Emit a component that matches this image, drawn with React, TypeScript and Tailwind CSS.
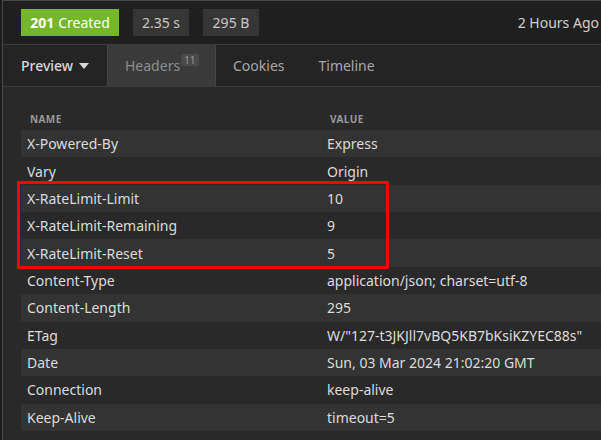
import React from 'react';

const headers: [string, string][] = [
	['X-Powered-By', 'Express'],
	['Vary', 'Origin'],
	['X-RateLimit-Limit', '10'],
	['X-RateLimit-Remaining', '9'],
	['X-RateLimit-Reset', '5'],
	['Content-Type', 'application/json; charset=utf-8'],
	['Content-Length', '295'],
	['ETag', 'W/"127-t3JKJll7vBQ5KB7bKsiKZYEC88s"'],
	['Date', 'Sun, 03 Mar 2024 21:02:20 GMT'],
	['Connection', 'keep-alive'],
	['Keep-Alive', 'timeout=5'],
];

function HeaderRow({ name, value, striped }: { name: string; value: string; striped: boolean }) {
	return (
		<div className={`flex items-center h-[27.36px] ${striped ? 'bg-[#333333]' : ''}`}>
			<span className="w-[306px] pl-[6px] shrink-0">{name}</span>
			<span className="whitespace-nowrap">{value}</span>
		</div>
	);
}

export default function App() {
	return (
		<div
			className="w-[601px] h-[440px] overflow-hidden bg-[#1c1c1c] pl-[2px] text-[14px] text-[#dcdcdc]"
			style={{ fontFamily: '"Noto Sans", "Open Sans", sans-serif' }}
		>
			<div className="h-full border-l border-t border-[#484848] bg-[#292929] flex flex-col">
				{/* status bar */}
				<div className="h-[43px] bg-[#1f1f1f] flex items-center pl-[18px] pr-[2px] gap-[14px] shrink-0">
					<div className="h-[27px] w-[98px] bg-[#75b72a] text-white flex items-center justify-center gap-[4px]">
						<span className="font-bold">201</span>
						<span>Created</span>
					</div>
					<div className="h-[27px] w-[56px] bg-[#363636] text-[#c8c8c8] flex items-center justify-center">
						2.35 s
					</div>
					<div className="h-[27px] w-[56px] bg-[#363636] text-[#c8c8c8] flex items-center justify-center">
						295 B
					</div>
					<span className="ml-auto text-[#cfcfcf] whitespace-nowrap">2 Hours Ago</span>
				</div>

				{/* tabs */}
				<div className="h-[43px] bg-[#242424] border-t border-b border-[#3c3c3c] flex shrink-0">
					<div className="w-[104px] flex items-center pl-[18px] gap-[6px] text-[#d8d8d8] font-medium">
						<span>Preview</span>
						<svg width="10" height="6" viewBox="0 0 10 6">
							<path d="M0 0h10L5 6z" fill="#d8d8d8" />
						</svg>
					</div>
					<div className="w-[109px] bg-[#3a3a3a] border-l border-r border-[#444] flex items-center pl-[17px] text-[#8e8e8e]">
						<span>Headers</span>
						<span className="ml-[1px] -mt-[12px] text-[10px] leading-none px-[3px] py-[1px] rounded-[2px] bg-[#4a4a4a] text-[#999]">
							11
						</span>
					</div>
					<div className="flex items-center pl-[17px] text-[#a8a8a8]">Cookies</div>
					<div className="flex items-center pl-[34px] text-[#a8a8a8]">Timeline</div>
				</div>

				{/* table */}
				<div className="pl-[18px] pt-[22px] relative">
					<div className="flex h-[20px] items-center text-[10px] font-bold tracking-[0.4px] text-[#9a9a9a]">
						<span className="w-[309px] pl-[9px]">NAME</span>
						<span>VALUE</span>
					</div>
					<div className="mt-[1px]">
						{headers.map(([n, v], i) => (
							<HeaderRow key={n} name={n} value={v} striped={i % 2 === 0} />
						))}
					</div>
					<div className="absolute left-[14px] top-[94px] w-[372px] h-[88px] border-[3px] border-[#ff0000]" />
				</div>
			</div>
		</div>
	);
}
